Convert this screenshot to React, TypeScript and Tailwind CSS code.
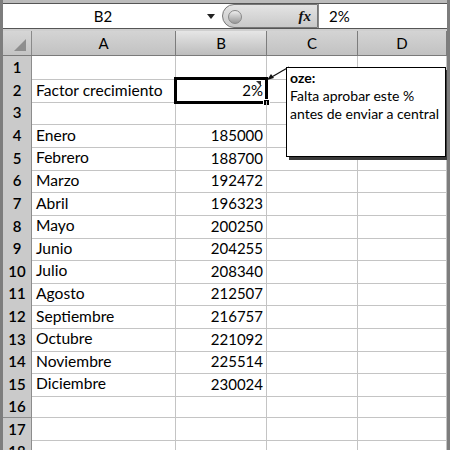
import React from 'react';

const font = { fontFamily: 'Lato, "Open Sans", "Liberation Sans", sans-serif' };

const rows: { label: string; value: string }[] = [
  { label: '', value: '' },
  { label: 'Factor crecimiento', value: '2%' },
  { label: '', value: '' },
  { label: 'Enero', value: '185000' },
  { label: 'Febrero', value: '188700' },
  { label: 'Marzo', value: '192472' },
  { label: 'Abril', value: '196323' },
  { label: 'Mayo', value: '200250' },
  { label: 'Junio', value: '204255' },
  { label: 'Julio', value: '208340' },
  { label: 'Agosto', value: '212507' },
  { label: 'Septiembre', value: '216757' },
  { label: 'Octubre', value: '221092' },
  { label: 'Noviembre', value: '225514' },
  { label: 'Diciembre', value: '230024' },
  { label: '', value: '' },
  { label: '', value: '' },
  { label: '', value: '' },
];

const cols = 'grid grid-cols-[29px_144px_91px_91px_89px]';

function FormulaBar() {
  return (
    <div className="flex h-[26px] border-y border-[#555] bg-white">
      <div className="relative flex w-[219px] items-center">
        <span className="w-[200px] text-center text-[15px] text-black">B2</span>
        <span className="absolute left-[204px] top-[10px] h-0 w-0 border-x-[4px] border-t-[5px] border-x-transparent border-t-[#222]" />
      </div>
      <div className="relative flex w-[96px] items-center justify-end rounded-l-full border border-[#777] bg-gradient-to-b from-[#e4e4e4] to-[#c9c9c9] pr-[6px]">
        <span className="absolute left-[5px] top-[5px] h-[14px] w-[14px] rounded-full border border-[#888] bg-gradient-to-b from-[#eee] to-[#999]" />
        <span className="font-['Liberation_Serif',serif] text-[15px] font-bold italic text-[#111]">fx</span>
      </div>
      <div className="flex flex-1 items-center border-l border-[#888] pl-[10px] text-[15px] text-black">2%</div>
    </div>
  );
}

function HeaderRow() {
  return (
    <div className={`${cols} h-[25px] border-b border-[#7a7a7a]`}>
      <div className="relative border-r border-[#8a8a8a] bg-gradient-to-b from-[#d6d6d6] to-[#c4c4c4]">
        <span className="absolute bottom-[4px] right-[5px] h-0 w-0 border-b-[12px] border-l-[12px] border-b-[#8e8e8e] border-l-transparent" />
      </div>
      {['A', 'B', 'C', 'D'].map((c) => (
        <div
          key={c}
          className={`flex items-center justify-center border-r border-[#7c7c7c] text-[15px] text-black ${
            c === 'B' ? 'bg-gradient-to-b from-[#e6e6e6] to-[#bdbdbd]' : 'bg-gradient-to-b from-[#d4d4d4] to-[#c2c2c2]'
          }`}
        >
          {c}
        </div>
      ))}
    </div>
  );
}

export default function App() {
  return (
    <div className="relative h-[450px] w-[450px] overflow-hidden border-l-[3px] border-r-[3px] border-[#7d7d7d] bg-white" style={font}>
      <div className="h-[3px] bg-[#bcbcbc]" />
      <FormulaBar />
      <div className="h-[2px] bg-[#cfcfcf]" />
      <HeaderRow />
      {rows.map((r, i) => (
        <div key={i} className={`${cols} h-[22.6px]`}>
          <div className="flex items-center justify-center border-r border-b border-[#8c8c8c] bg-[#cacaca] text-[15px] font-semibold text-black">
            {i + 1}
          </div>
          <div className="flex items-center overflow-visible whitespace-nowrap border-r border-b border-[#c4c4c4] pl-[4px] text-[15.6px] text-black">
            {r.label}
          </div>
          <div className="relative flex items-center justify-end border-r border-b border-[#c4c4c4] pr-[3px] text-[15px] text-black">
            {r.value}
            {i === 1 && (
              <>
                <span className="absolute inset-[-2px] border-[3px] border-black" />
                <span className="absolute right-[5px] top-[2px] h-0 w-0 border-t-[5px] border-l-[5px] border-t-[#333] border-l-transparent" />
                <span className="absolute bottom-[-4px] right-[-4px] h-[7px] w-[7px] border border-white bg-black" />
              </>
            )}
          </div>
          <div className="border-r border-b border-[#c4c4c4]" />
          <div className="border-r border-b border-[#c4c4c4]" />
        </div>
      ))}

      <svg className="absolute left-[260px] top-[63px]" width="28" height="22" viewBox="0 0 28 22">
        <line x1="26" y1="4" x2="7" y2="15" stroke="#111" strokeWidth="1.2" />
        <polygon points="4,17 8,11 11,15" fill="#111" />
      </svg>
      <div className="absolute left-[283px] top-[67px] h-[90px] w-[160px] border border-black bg-white pl-[3px] pt-[1px] text-[14px] leading-[18px] text-black shadow-[3px_3px_0_#3a3a3a]">
        <div className="font-bold">oze:</div>
        <div>Falta aprobar este %</div>
        <div>antes de enviar a central</div>
      </div>
    </div>
  );
}
